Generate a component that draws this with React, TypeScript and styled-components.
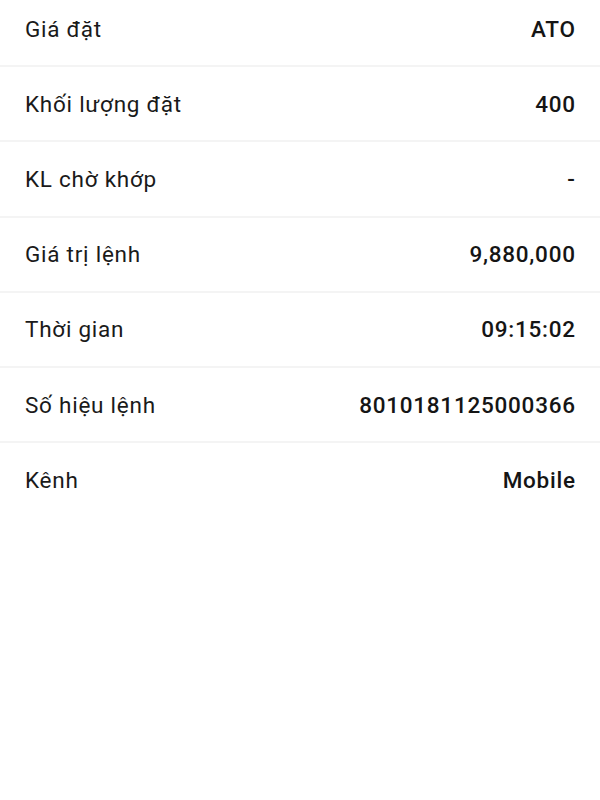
import React from "react";
import styled, { createGlobalStyle } from "styled-components";

const Global = createGlobalStyle`
  html, body { margin: 0; padding: 0; background: #ffffff; }
  body { font-family: Roboto, "Noto Sans", "Liberation Sans", sans-serif; }
`;

const Page = styled.div`
  width: 600px;
  height: 800px;
  overflow: hidden;
  background: #ffffff;
`;

const List = styled.div`
  display: flex;
  flex-direction: column;
  margin-top: -8px;
`;

const Row = styled.div<{ $last?: boolean }>`
  display: flex;
  align-items: center;
  justify-content: space-between;
  height: 73.2px;
  padding: 0 25px 0 25px;
  border-bottom: 2px solid ${(p) => (p.$last ? "transparent" : "#f4f4f4")};
`;

const Label = styled.span`
  font-size: 22.5px;
  letter-spacing: 0.75px;
  font-weight: 400;
  color: #1a1a1a;
`;

const Value = styled.span`
  font-size: 22.5px;
  letter-spacing: 0.75px;
  margin-right: -0.75px;
  font-weight: 500;
  color: #151515;
`;

const rows: [string, string][] = [
  ["Giá đặt", "ATO"],
  ["Khối lượng đặt", "400"],
  ["KL chờ khớp", "-"],
  ["Giá trị lệnh", "9,880,000"],
  ["Thời gian", "09:15:02"],
  ["Số hiệu lệnh", "8010181125000366"],
  ["Kênh", "Mobile"],
];

export default function App() {
  return (
    <Page>
      <Global />
      <List>
        {rows.map(([l, v], i) => (
          <Row key={l} $last={i === rows.length - 1}>
            <Label>{l}</Label>
            <Value>{v}</Value>
          </Row>
        ))}
      </List>
    </Page>
  );
}
